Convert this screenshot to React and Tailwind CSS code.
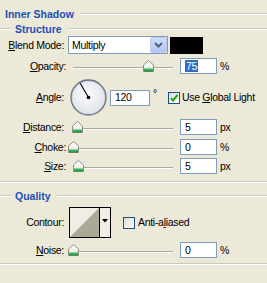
import React from "react";

const font = { fontFamily: '"Liberation Sans", Arial, sans-serif' };

function Line({ className = "" }) {
  return <div className={"h-0 border-t border-t-[#cdcab9] border-b border-b-white " + className} />;
}

function Thumb() {
  return (
    <svg width="11" height="12" viewBox="0 0 11 12">
      <defs>
        <linearGradient id="tg" x1="0" y1="0" x2="0" y2="1">
          <stop offset="0" stopColor="#ffffff" />
          <stop offset="1" stopColor="#e4e4dc" />
        </linearGradient>
      </defs>
      <path d="M5.5 0.5 L10.5 5 V11.5 H0.5 V5 Z" fill="url(#tg)" stroke="#8d8d86" />
      <rect x="1" y="8.5" width="9" height="2.5" fill="#3bb55a" />
      <line x1="1" y1="11" x2="10" y2="11" stroke="#21873b" />
    </svg>
  );
}

function Slider({ pos }) {
  return (
    <div className="relative w-[112px] h-[16px] shrink-0">
      <div className="absolute left-[5px] top-[9px] w-[100px] h-0 border-t border-t-[#a9a899] border-b border-b-white" />
      <div className="absolute top-[2px]" style={{ left: pos - 68 - 5 }}>
        <Thumb />
      </div>
    </div>
  );
}

function Input({ children, w = "w-[37px]" }) {
  return (
    <div className={"h-[16px] bg-white border border-[#7f9db9] flex items-center pl-[4px] text-black shrink-0 " + w}>
      {children}
    </div>
  );
}

function Label({ children, w = "w-[64px]" }) {
  return <div className={"text-right shrink-0 " + w}>{children}</div>;
}

function U({ children }) {
  return <span className="underline decoration-1 underline-offset-[1px]">{children}</span>;
}

function CheckBox({ checked }) {
  return (
    <div className="w-[12px] h-[12px] border border-[#1c5180] bg-gradient-to-br from-[#dcdcd7] to-white flex items-center justify-center shrink-0">
      {checked && (
        <svg width="10" height="10" viewBox="0 0 10 10">
          <path d="M2 5 L4 7.5 L8.5 2" fill="none" stroke="#21a121" strokeWidth="2" />
        </svg>
      )}
    </div>
  );
}

function Dial() {
  const cx = 18.5, cy = 18.5;
  return (
    <svg width="37" height="37" viewBox="0 0 37 37" className="shrink-0">
      <defs>
        <radialGradient id="dg" cx="0.45" cy="0.4" r="0.6">
          <stop offset="0" stopColor="#fbfbfd" />
          <stop offset="1" stopColor="#e2e4ec" />
        </radialGradient>
      </defs>
      <circle cx={cx} cy={cy} r="17.5" fill="#c9ccd6" stroke="#6b7486" strokeWidth="1.3" />
      <circle cx={cx} cy={cy} r="16" fill="url(#dg)" />
      <line x1={cx} y1={cy} x2={cx - 8.3} y2={cy - 14.3} stroke="#000" strokeWidth="1.1" />
      <circle cx={cx} cy={cy} r="1.8" fill="#000" />
    </svg>
  );
}

export default function App() {
  return (
    <div
      className="w-[267px] h-[283px] bg-[#ece9d8] overflow-hidden text-[10.5px] tracking-[-0.3px] leading-none text-black pt-[8px]"
      style={font}
    >
      {/* Inner Shadow header */}
      <div className="flex items-center h-[12px]">
        <span className="pl-[5px] pr-[6px] font-bold text-[#1d4fb5] tracking-normal">Inner Shadow</span>
        <Line className="flex-1" />
      </div>

      {/* Structure header */}
      <div className="flex items-center h-[12px] mt-[3px]">
        <Line className="w-[11px]" />
        <span className="pl-[4px] pr-[6px] font-bold text-[#1d4fb5] tracking-normal">Structure</span>
        <Line className="flex-1" />
      </div>

      {/* Blend Mode */}
      <div className="flex items-center h-[18px] mt-[1px]">
        <Label><U>B</U>lend Mode:</Label>
        <div className="ml-[4px] w-[100px] h-[18px] bg-white border border-[#7f9db9] flex items-center justify-between">
          <span className="pl-[3px]">Multiply</span>
          <div className="w-[17px] h-[16px] rounded-[2px] border border-[#bccbef] bg-gradient-to-b from-[#d0dcf8] to-[#b2c5f1] flex items-center justify-center">
            <svg width="9" height="6" viewBox="0 0 9 6">
              <path d="M1 1 L4.5 4.5 L8 1" fill="none" stroke="#4c6087" strokeWidth="2" />
            </svg>
          </div>
        </div>
        <div className="ml-[2px] w-[33px] h-[17px] bg-black" />
      </div>

      {/* Opacity */}
      <div className="flex items-center h-[16px] mt-[4px]">
        <Label w="w-[66px]"><U>O</U>pacity:</Label>
        <div className="ml-[2px]"><Slider pos={147.5} /></div>
        <Input>
          <span className="bg-[#316ac5] text-white px-[1px] leading-[12px]">75</span>
        </Input>
        <span className="ml-[3px]">%</span>
      </div>

      {/* Angle */}
      <div className="flex items-center h-[37px] mt-[5px]">
        <Label><U>A</U>ngle:</Label>
        <div className="ml-[6px]"><Dial /></div>
        <div className="ml-[3px]"><Input w="w-[40px]">120</Input></div>
        <span className="ml-[3px] self-start mt-[9px]">°</span>
        <div className="ml-[11px]"><CheckBox checked /></div>
        <span className="ml-[2px]">Use <U>G</U>lobal Light</span>
      </div>

      {/* Distance */}
      <div className="flex items-center h-[16px] mt-[3px]">
        <Label><U>D</U>istance:</Label>
        <div className="ml-[4px]"><Slider pos={77} /></div>
        <Input>5</Input>
        <span className="ml-[3px]">px</span>
      </div>

      {/* Choke */}
      <div className="flex items-center h-[16px] mt-[4px]">
        <Label w="w-[66px]"><U>C</U>hoke:</Label>
        <div className="ml-[2px]"><Slider pos={73} /></div>
        <Input>0</Input>
        <span className="ml-[3px]">%</span>
      </div>

      {/* Size */}
      <div className="flex items-center h-[16px] mt-[3px]">
        <Label w="w-[66px]"><U>S</U>ize:</Label>
        <div className="ml-[2px]"><Slider pos={78} /></div>
        <Input>5</Input>
        <span className="ml-[3px]">px</span>
      </div>

      <Line className="mt-[7px]" />

      {/* Quality header */}
      <div className="flex items-center h-[12px] mt-[7px]">
        <Line className="w-[11px]" />
        <span className="pl-[4px] pr-[6px] font-bold text-[#1d4fb5] tracking-normal">Quality</span>
        <Line className="flex-1" />
      </div>

      {/* Contour */}
      <div className="flex items-center h-[31px] mt-[5px]">
        <Label>Contour:</Label>
        <div className="ml-[5px] w-[42px] h-[31px] border border-black flex bg-[#efede4]">
          <svg width="29" height="29" viewBox="0 0 29 29" className="shrink-0">
            <polygon points="0,29 29,0 29,29" fill="#aca896" />
          </svg>
          <div className="w-px bg-black" />
          <div className="flex-1 flex items-start justify-center pt-[11px]">
            <svg width="6" height="4" viewBox="0 0 6 4">
              <polygon points="0,0 6,0 3,3.5" fill="#000" />
            </svg>
          </div>
        </div>
        <div className="ml-[12px]"><CheckBox /></div>
        <span className="ml-[3px]">Anti-a<U>l</U>iased</span>
      </div>

      {/* Noise */}
      <div className="flex items-center h-[16px] mt-[4px]">
        <Label><U>N</U>oise:</Label>
        <div className="ml-[4px]"><Slider pos={72.5} /></div>
        <Input>0</Input>
        <span className="ml-[3px]">%</span>
      </div>

      <Line className="mt-[5px]" />
    </div>
  );
}
